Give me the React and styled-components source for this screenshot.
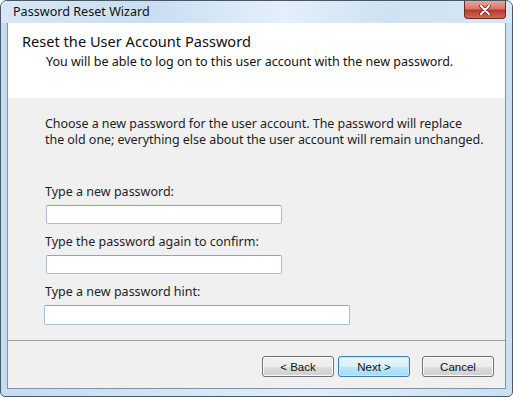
import styled, { createGlobalStyle } from "styled-components";

const GlobalStyle = createGlobalStyle`
  html, body {
    margin: 0;
    padding: 0;
    background: #ffffff;
  }
`;

const Window = styled.div`
  box-sizing: border-box;
  width: 513px;
  height: 397px;
  display: flex;
  flex-direction: column;
  border: 1px solid #4a5866;
  border-radius: 7px 7px 5px 5px;
  background: linear-gradient(90deg, #c4dcf1 0%, #d6e7f6 40%, #e2eef9 60%, #c9e0f3 100%);
  font-family: "Noto Sans", "Open Sans", sans-serif;
  color: #1e1e1e;
  overflow: hidden;
`;

const TitleBar = styled.div`
  height: 22px;
  display: flex;
  align-items: center;
  justify-content: space-between;
  padding-left: 12px;
  background: linear-gradient(90deg, #d8e7f5 0%, #c9def2 30%, #e4f0fa 55%, #cfe2f3 75%, #d6e6f5 100%);
`;

const Title = styled.span`
  font-size: 12.6px;
  color: #111;
  margin-top: -2px;
`;

const CloseButton = styled.div`
  box-sizing: border-box;
  width: 42px;
  height: 18px;
  margin-right: 6px;
  margin-top: -4px;
  border: 1px solid #6b2a22;
  border-top: none;
  border-radius: 0 0 4px 4px;
  background: linear-gradient(180deg, #e6a89c 0%, #d5786a 45%, #b8392b 55%, #cf6a55 100%);
  display: flex;
  align-items: center;
  justify-content: center;
`;

const Client = styled.div`
  flex: 1;
  display: flex;
  flex-direction: column;
  margin: 0 6px 7px 6px;
  border: 1px solid #7f93a8;
  border-top: none;
  background: #f0f0f0;
`;

const Header = styled.div`
  height: 75px;
  box-sizing: border-box;
  background: #ffffff;
  padding: 8px 0 0 14px;
`;

const HeaderTitle = styled.div`
  font-size: 14.6px;
  line-height: 20px;
  color: #0f0f0f;
`;

const HeaderSub = styled.div`
  font-size: 12.5px;
  line-height: 16px;
  margin: 3px 0 0 24px;
  color: #111;
`;

const Body = styled.div`
  flex: 1;
  padding: 18px 0 0 37px;
  border-bottom: 1px solid #a0a0a0;
  font-size: 12.5px;
  line-height: 16px;
`;

const Intro = styled.p`
  margin: 0;
  white-space: nowrap;
  letter-spacing: -0.05px;
`;

const Field = styled.div`
  margin-top: ${(p) => p.$top}px;
  display: flex;
  flex-direction: column;
`;

const Label = styled.label`
  margin-bottom: 5px;
`;

const Input = styled.input`
  box-sizing: border-box;
  width: ${(p) => p.$width}px;
  height: ${(p) => p.$height || 19}px;
  margin-left: ${(p) => p.$indent || 0}px;
  border: 1px solid #a9bdd0;
  border-top-color: #8fa4ba;
  border-radius: 2px;
  background: #fff;
  outline: none;
`;

const Footer = styled.div`
  box-sizing: border-box;
  height: 47px;
  display: flex;
  align-items: center;
  justify-content: flex-end;
  padding: 4px 11px 0 0;
`;

const Button = styled.button`
  box-sizing: border-box;
  width: 72px;
  height: 21px;
  margin-left: ${(p) => p.$gap}px;
  padding: 0;
  font-family: "Liberation Sans", Arial, sans-serif;
  font-size: 11.5px;
  color: #111;
  border-radius: 3px;
  border: 1px solid ${(p) => (p.$primary ? "#3c7fb1" : "#707070")};
  background: ${(p) =>
    p.$primary
      ? "linear-gradient(180deg, #eaf6fd 0%, #d9f0fc 50%, #bee6fd 51%, #a7d9f5 100%)"
      : "linear-gradient(180deg, #f2f2f2 0%, #ebebeb 50%, #dddddd 51%, #cfcfcf 100%)"};
  box-shadow: inset 0 0 0 1px ${(p) => (p.$primary ? "#c9e9f9" : "#fcfcfc")};
`;

export default function App() {
  return (
    <>
      <GlobalStyle />
      <Window>
        <TitleBar>
          <Title>Password Reset Wizard</Title>
          <CloseButton>
            <svg width="12" height="10" viewBox="0 0 12 10">
              <path d="M2 1 L10 9 M10 1 L2 9" stroke="#5a1a12" strokeWidth="3.4" strokeLinecap="round" />
              <path d="M2 1 L10 9 M10 1 L2 9" stroke="#ffffff" strokeWidth="2" strokeLinecap="round" />
            </svg>
          </CloseButton>
        </TitleBar>
        <Client>
          <Header>
            <HeaderTitle>Reset the User Account Password</HeaderTitle>
            <HeaderSub>
              You will be able to log on to this user account with the new password.
            </HeaderSub>
          </Header>
          <Body>
            <Intro>
              Choose a new password for the user account. The password will replace
              <br />
              the old one; everything else about the user account will remain unchanged.
            </Intro>
            <Field $top={36}>
              <Label>Type a new password:</Label>
              <Input type="password" $width={236} $indent={1} />
            </Field>
            <Field $top={10}>
              <Label>Type the password again to confirm:</Label>
              <Input type="password" $width={236} $indent={1} />
            </Field>
            <Field $top={10}>
              <Label>Type a new password hint:</Label>
              <Input type="text" $width={306} $height={20} $indent={-1} />
            </Field>
          </Body>
          <Footer>
            <Button $gap={0}>&lt; Back</Button>
            <Button $gap={4} $primary>
              Next &gt;
            </Button>
            <Button $gap={12}>Cancel</Button>
          </Footer>
        </Client>
      </Window>
    </>
  );
}
